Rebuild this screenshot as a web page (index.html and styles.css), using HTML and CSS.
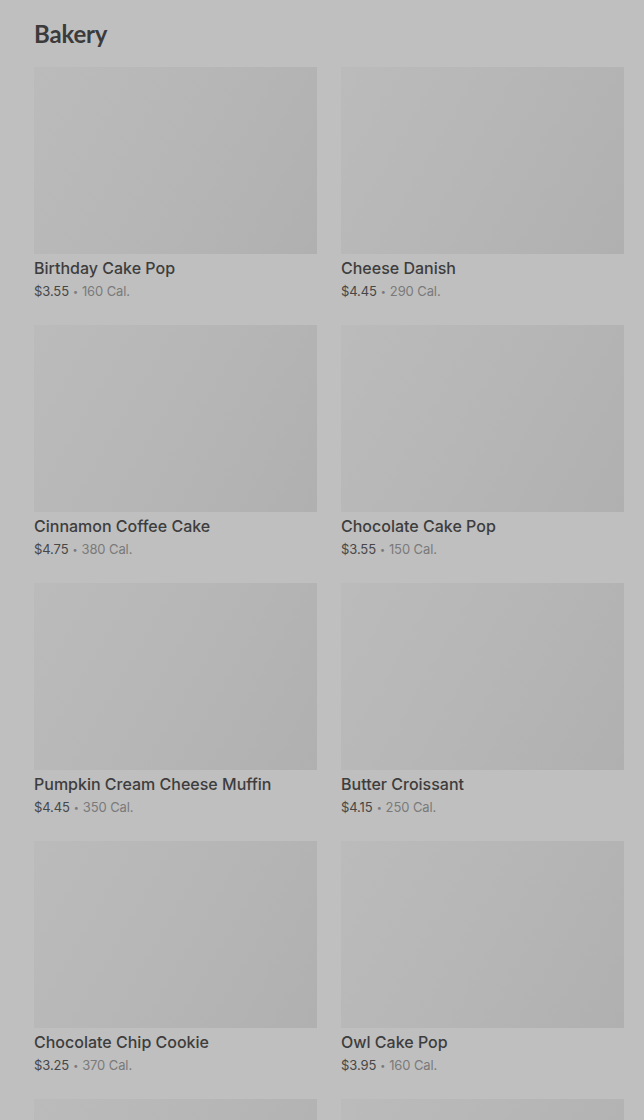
FILE: index.html
```html
<!DOCTYPE html>
<html lang="en">
<head>
    <meta charset="UTF-8">
    <title>Bakery</title>
    <link rel="stylesheet" href="styles.css">
</head>
<body>
    <h1 class="title">Bakery</h1>

    <div class="menu-grid">
        <div class="item">
            <div class="item-image"></div>
            <div class="item-name">Birthday Cake Pop</div>
            <div class="item-meta"><span class="price">$3.55</span><span class="dot">•</span>160 Cal.</div>
        </div>
        <div class="item">
            <div class="item-image"></div>
            <div class="item-name">Cheese Danish</div>
            <div class="item-meta"><span class="price">$4.45</span><span class="dot">•</span>290 Cal.</div>
        </div>
        <div class="item">
            <div class="item-image"></div>
            <div class="item-name">Cinnamon Coffee Cake</div>
            <div class="item-meta"><span class="price">$4.75</span><span class="dot">•</span>380 Cal.</div>
        </div>
        <div class="item">
            <div class="item-image"></div>
            <div class="item-name">Chocolate Cake Pop</div>
            <div class="item-meta"><span class="price">$3.55</span><span class="dot">•</span>150 Cal.</div>
        </div>
        <div class="item">
            <div class="item-image"></div>
            <div class="item-name">Pumpkin Cream Cheese Muffin</div>
            <div class="item-meta"><span class="price">$4.45</span><span class="dot">•</span>350 Cal.</div>
        </div>
        <div class="item">
            <div class="item-image"></div>
            <div class="item-name">Butter Croissant</div>
            <div class="item-meta"><span class="price">$4.15</span><span class="dot">•</span>250 Cal.</div>
        </div>
        <div class="item">
            <div class="item-image"></div>
            <div class="item-name">Chocolate Chip Cookie</div>
            <div class="item-meta"><span class="price">$3.25</span><span class="dot">•</span>370 Cal.</div>
        </div>
        <div class="item">
            <div class="item-image"></div>
            <div class="item-name">Owl Cake Pop</div>
            <div class="item-meta"><span class="price">$3.95</span><span class="dot">•</span>160 Cal.</div>
        </div>
        <!-- next row, only the tops show in the viewport -->
        <div class="item">
            <div class="item-image"></div>
        </div>
        <div class="item">
            <div class="item-image"></div>
        </div>
    </div>
</body>
</html>
```

FILE: styles.css
```css
body {
    margin: 0;
    padding: 20px 20px 0 34px;
    background: #bfbfbf;
    font-family: Inter, Roboto, sans-serif;
    overflow: hidden;
}

/* page heading */
.title {
    margin: 0 0 19px;
    font-family: Lato, "Open Sans", sans-serif;
    font-size: 24px;
    line-height: 28px;
    font-weight: 700;
    color: #3b3b3b;
    letter-spacing: -0.2px;
}

.menu-grid {
    display: grid;
    grid-template-columns: 283px 283px;
    column-gap: 24px;
    row-gap: 25px;
}

.item-image {
    height: 187px;
    background: linear-gradient(120deg, #bbbbbb 0%, #b6b6b6 50%, #b0b0b0 100%);
}

.item-name {
    margin-top: 3px;
    font-size: 16px;
    line-height: 22px;
    font-weight: 500;
    color: #3d3d3d;
}

.item-meta {
    margin-top: 3px;
    height: 18px;
    font-size: 13px;
    line-height: 18px;
    color: #7a7a7a;
    letter-spacing: -0.1px;
}

.price {
    color: #474747;
}

.dot {
    font-size: 9px;
    line-height: 0;
    margin: 0 4px;
    vertical-align: 1px;
}
```
